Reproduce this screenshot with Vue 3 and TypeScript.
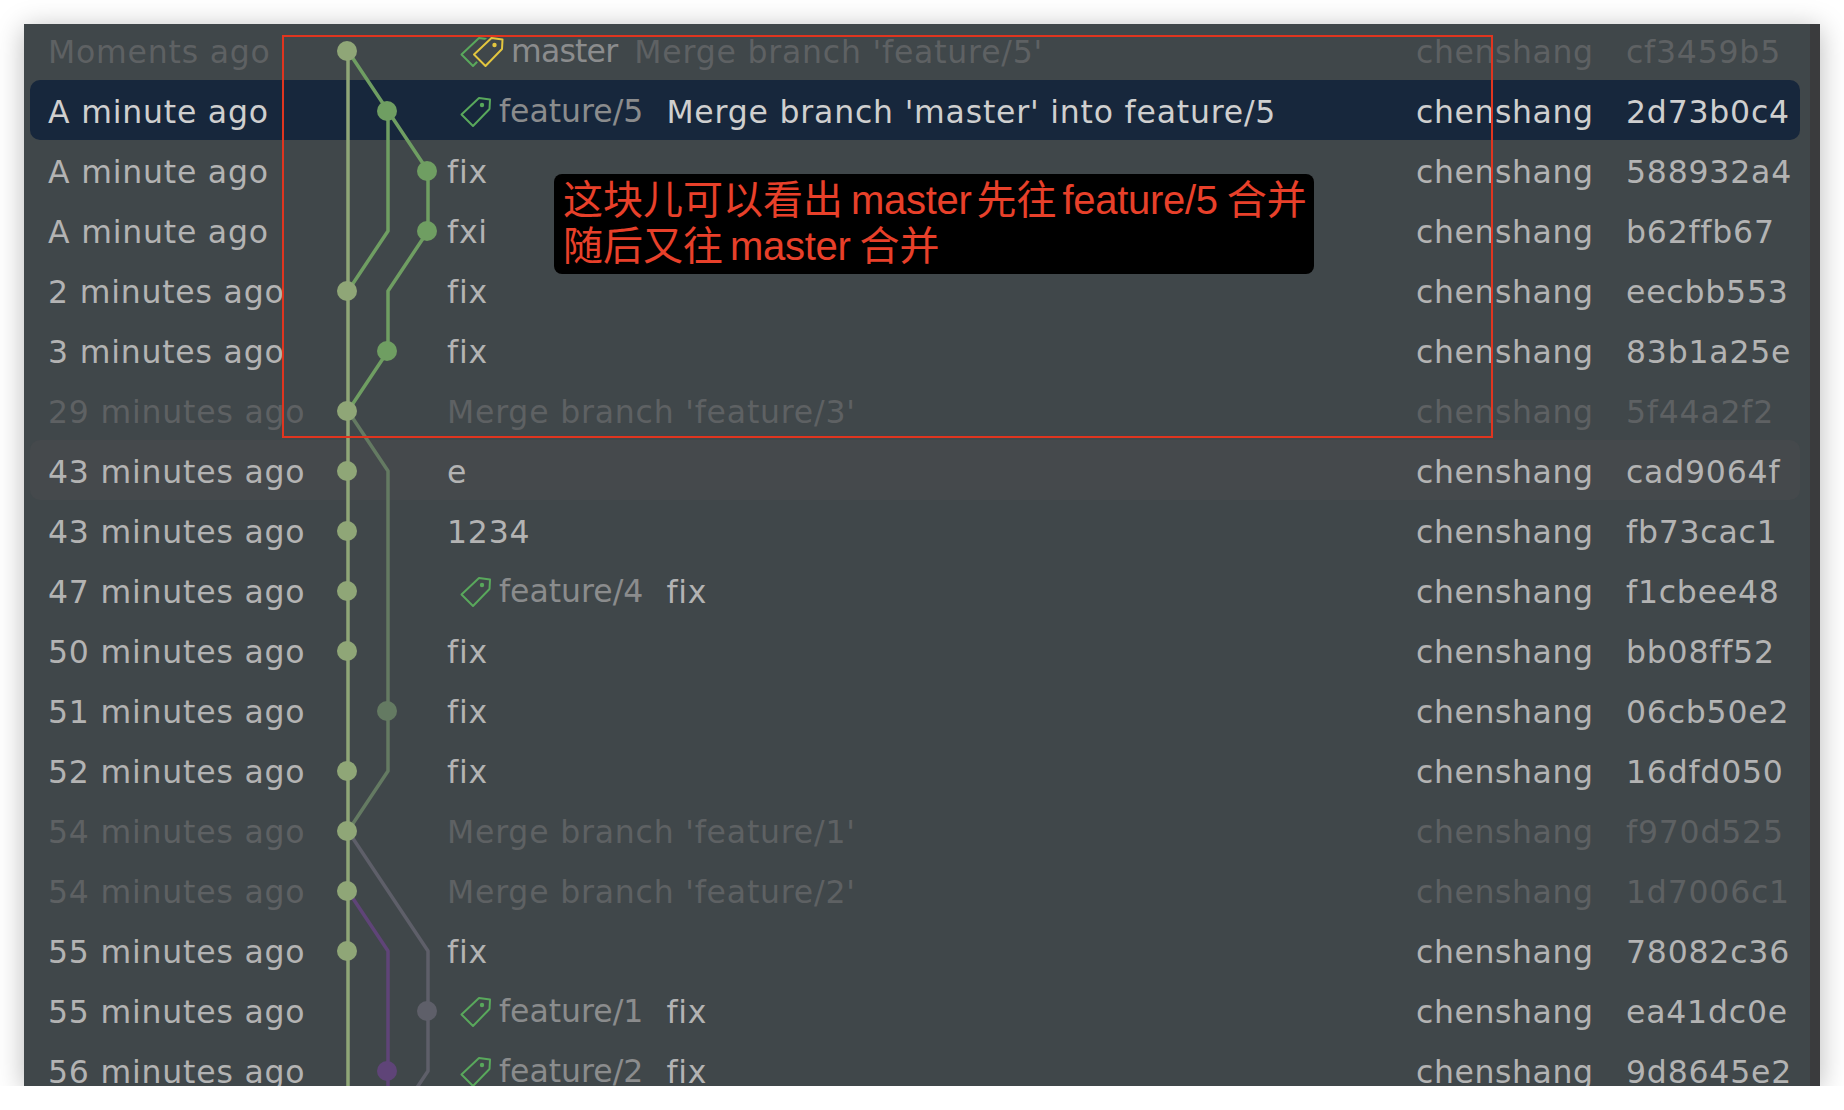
<script setup lang="ts">
interface Commit {
  time: string
  msg: string
  hash: string
  dim?: boolean
  tag?: string
  kind?: 'selected' | 'hover'
}

const commits: Commit[] = [
  { time: 'Moments ago', msg: "Merge branch 'feature/5'", hash: 'cf3459b5', dim: true, tag: 'master' },
  { time: 'A minute ago', msg: "Merge branch 'master' into feature/5", hash: '2d73b0c4', tag: 'feature/5', kind: 'selected' },
  { time: 'A minute ago', msg: 'fix', hash: '588932a4' },
  { time: 'A minute ago', msg: 'fxi', hash: 'b62ffb67' },
  { time: '2 minutes ago', msg: 'fix', hash: 'eecbb553' },
  { time: '3 minutes ago', msg: 'fix', hash: '83b1a25e' },
  { time: '29 minutes ago', msg: "Merge branch 'feature/3'", hash: '5f44a2f2', dim: true },
  { time: '43 minutes ago', msg: 'e', hash: 'cad9064f', kind: 'hover' },
  { time: '43 minutes ago', msg: '1234', hash: 'fb73cac1' },
  { time: '47 minutes ago', msg: 'fix', hash: 'f1cbee48', tag: 'feature/4' },
  { time: '50 minutes ago', msg: 'fix', hash: 'bb08ff52' },
  { time: '51 minutes ago', msg: 'fix', hash: '06cb50e2' },
  { time: '52 minutes ago', msg: 'fix', hash: '16dfd050' },
  { time: '54 minutes ago', msg: "Merge branch 'feature/1'", hash: 'f970d525', dim: true },
  { time: '54 minutes ago', msg: "Merge branch 'feature/2'", hash: '1d7006c1', dim: true },
  { time: '55 minutes ago', msg: 'fix', hash: '78082c36' },
  { time: '55 minutes ago', msg: 'fix', hash: 'ea41dc0e', tag: 'feature/1' },
  { time: '56 minutes ago', msg: 'fix', hash: '9d8645e2', tag: 'feature/2' },
]

const A = 348
const B = 388
const C = 428
const rowY = (n: number): number => 51 + 60 * (n - 1)

const main = '#8fa677'
const green = '#6f9e62'
const sage = '#647a62'
const slate = '#5e5f69'
const plum = '#5f4478'

const pts = (list: [number, number][]): string => list.map(([x, r]) => `${x},${rowY(r)}`).join(' ')

const edges: { points: string; color: string }[] = [
  { points: pts([[A, 1], [A, 19]]), color: main },
  { points: pts([[A, 1], [B, 2], [C, 3], [C, 4], [B, 5], [B, 6], [A, 7]]), color: green },
  { points: pts([[B, 2], [B, 4], [A, 5]]), color: green },
  { points: pts([[A, 7], [B, 8], [B, 13], [A, 14]]), color: sage },
  { points: pts([[A, 14], [C, 16], [C, 18], [B, 19]]), color: slate },
  { points: pts([[A, 15], [B, 16], [B, 19]]), color: plum },
]

const nodes: { x: number; r: number; color: string }[] = [
  ...[1, 5, 7, 8, 9, 10, 11, 13, 14, 15, 16].map((r) => ({ x: A - 1, r, color: main })),
  { x: B - 1, r: 2, color: green },
  { x: C - 1, r: 3, color: green },
  { x: C - 1, r: 4, color: green },
  { x: B - 1, r: 6, color: green },
  { x: B - 1, r: 12, color: sage },
  { x: C - 1, r: 17, color: slate },
  { x: B - 1, r: 18, color: plum },
]

const tagPath = 'M19 2 L30 3.5 L29.5 13 L13 30 L1.5 18.5 Z'
</script>

<template>
  <div class="window">
    <div class="rows">
      <div
        v-for="c in commits"
        :key="c.hash"
        class="row"
        :class="[c.kind, { dim: c.dim }]"
      >
        <div class="time">{{ c.time }}</div>
        <div class="message">
          <span v-if="c.tag" class="ref" :class="{ 'ref-master': c.tag === 'master' }">
            <svg v-if="c.tag === 'master'" class="tag" width="44" height="32" viewBox="0 0 44 32">
              <path :d="tagPath" fill="none" stroke="#59a85c" stroke-width="2" stroke-linejoin="round" />
              <g transform="translate(12.5 0)">
                <path :d="tagPath" fill="#40474a" stroke="#40474a" stroke-width="6" stroke-linejoin="round" />
                <path :d="tagPath" fill="#40474a" stroke="#e3c63f" stroke-width="2" stroke-linejoin="round" />
                <circle cx="22" cy="9" r="2.2" fill="#e3c63f" />
              </g>
            </svg>
            <svg v-else class="tag" width="32" height="32" viewBox="0 0 32 32">
              <path :d="tagPath" fill="none" stroke="#59a85c" stroke-width="2" stroke-linejoin="round" />
              <circle cx="22" cy="9" r="2.2" fill="#59a85c" />
            </svg>
            <span class="ref-name">{{ c.tag }}</span>
          </span>
          <span>{{ c.msg }}</span>
        </div>
        <div class="author">chenshang</div>
        <div class="hash">{{ c.hash }}</div>
      </div>
    </div>

    <div class="scrollbar"></div>

    <svg class="graph" width="1796" height="1062" viewBox="24 24 1796 1062">
      <polyline
        v-for="(e, i) in edges"
        :key="i"
        :points="e.points"
        :stroke="e.color"
        fill="none"
        stroke-width="3.5"
        stroke-linejoin="round"
      />
      <ellipse
        v-for="(n, i) in nodes"
        :key="'n' + i"
        :cx="n.x"
        :cy="rowY(n.r)"
        rx="10"
        ry="10"
        :fill="n.color"
      />
    </svg>

    <div class="red-frame"></div>

    <div class="note">
      <div>这块儿可以看出<span class="l1">master</span>先往<span class="l2">feature/5</span>合并</div>
      <div>随后又往<span class="l3">master</span>合并</div>
    </div>
  </div>
</template>

<style scoped>
.window {
  position: relative;
  width: 1796px;
  height: 1062px;
  margin: 24px 0 0 24px;
  background: #40474a;
  overflow: hidden;
  box-shadow: 0 4px 26px rgba(0, 0, 0, 0.28);
  font-family: "DejaVu Sans", "Noto Sans CJK SC", sans-serif;
  font-size: 31.5px;
  letter-spacing: 0.8px;
  color: #b3b3b3;
}

.rows {
  display: flex;
  flex-direction: column;
  margin-top: -4px;
}

.row {
  display: grid;
  grid-template-columns: 417px 969px 210px 184px;
  align-items: center;
  height: 60px;
  box-sizing: border-box;
  padding-top: 5px;
  margin: 0 20px 0 6px;
  border-radius: 10px;
  white-space: nowrap;
  line-height: 55px;
}

.row.selected {
  background: #17273c;
  color: #cfcfcf;
}

.row.hover {
  background: #45494c;
}

.row.dim .time,
.row.dim .message,
.row.dim .author,
.row.dim .hash {
  color: #5e6163;
}

.time {
  padding-left: 18px;
}

.author {
  letter-spacing: 0.6px;
}

.message {
  display: flex;
  align-items: center;
}

.ref {
  display: flex;
  align-items: center;
  margin-left: 13px;
  margin-right: 23px;
}

.ref-master {
  margin-right: 17px;
}

.tag {
  flex: none;
  margin-right: 7px;
  margin-top: -2px;
}

.ref-name {
  color: #8b8c8d;
  margin-top: -3px;
  letter-spacing: 0;
}

.ref-master .ref-name {
  letter-spacing: -0.8px;
}

.scrollbar {
  position: absolute;
  top: 0;
  right: 0;
  width: 10px;
  height: 100%;
  background: #3a3b3d;
}

.graph {
  position: absolute;
  left: 0;
  top: 0;
}

.red-frame {
  position: absolute;
  left: 258px;
  top: 11px;
  width: 1211px;
  height: 403px;
  border: 2px solid #e0351f;
  box-sizing: border-box;
}

.note {
  position: absolute;
  left: 530px;
  top: 150px;
  width: 760px;
  height: 100px;
  box-sizing: border-box;
  padding: 3px 0 0 9px;
  background: #000;
  border-radius: 8px;
  color: #e8402a;
  font-family: "Liberation Sans", "Noto Sans CJK SC", sans-serif;
  font-size: 40px;
  line-height: 46px;
  letter-spacing: 0;
  white-space: nowrap;
}

.l1 {
  margin: 0 5px 0 8px;
  letter-spacing: -0.3px;
}

.l2 {
  margin: 0 9px 0 6px;
  letter-spacing: -0.3px;
}

.l3 {
  margin: 0 9px 0 7px;
  letter-spacing: -0.3px;
}
</style>

<style>
html,
body {
  background: #fff;
}
</style>
